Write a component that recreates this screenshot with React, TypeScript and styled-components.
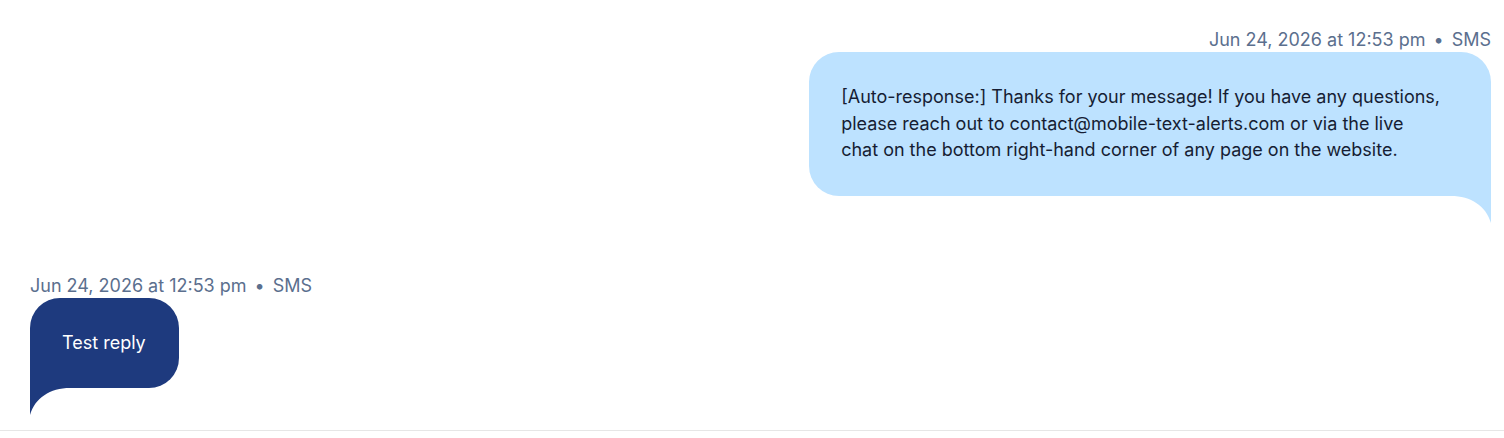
import React from 'react';
import styled, { createGlobalStyle } from 'styled-components';

const GlobalStyle = createGlobalStyle`
  html, body {
    margin: 0;
    padding: 0;
    background: #ffffff;
  }
  body {
    font-family: Inter, "Noto Sans", "Liberation Sans", sans-serif;
    -webkit-font-smoothing: antialiased;
  }
`;

const Thread = styled.div`
  display: flex;
  flex-direction: column;
  gap: 51px;
  padding: 28px 13px 15px 30px;
  border-bottom: 1px solid #e6e6e6;
  box-sizing: border-box;
`;

const MessageGroup = styled.div<{ $outgoing?: boolean }>`
  display: flex;
  flex-direction: column;
  align-items: ${(p) => (p.$outgoing ? 'flex-end' : 'flex-start')};
`;

const Meta = styled.div`
  font-size: 18px;
  line-height: 24px;
  color: #5b6f8e;
  white-space: nowrap;
`;

const Dot = styled.span`
  margin: 0 8px;
`;

const Bubble = styled.div<{ $outgoing?: boolean }>`
  position: relative;
  box-sizing: border-box;
  padding: ${(p) => (p.$outgoing ? '32px 51px 32px 32px' : '32px 33px 32px 32px')};
  margin-bottom: 27px;
  font-size: 18px;
  line-height: 26.6px;
  white-space: nowrap;
  background: ${(p) => (p.$outgoing ? '#bde2ff' : '#1e3a7e')};
  color: ${(p) => (p.$outgoing ? '#161d33' : '#ffffff')};
  border-radius: ${(p) => (p.$outgoing ? '30px 30px 0 30px' : '30px 30px 30px 0')};
`;

const Tail = styled.svg<{ $outgoing?: boolean }>`
  position: absolute;
  top: 100%;
  ${(p) => (p.$outgoing ? 'right: 0;' : 'left: 0;')}
  width: 40px;
  height: 27px;
  display: block;
`;

const BubbleTail = ({ outgoing }: { outgoing?: boolean }) => (
  <Tail $outgoing={outgoing} viewBox="0 0 40 27" aria-hidden="true">
    {outgoing ? (
      <path d="M0 0 H40 V27 C35 10 20 0 0 0 Z" fill="#bde2ff" />
    ) : (
      <path d="M40 0 H0 V27 C5 10 20 0 40 0 Z" fill="#1e3a7e" />
    )}
  </Tail>
);

interface Message {
  id: number;
  outgoing: boolean;
  time: string;
  channel: string;
  lines: string[];
}

const messages: Message[] = [
  {
    id: 1,
    outgoing: true,
    time: 'Jun 24, 2026 at 12:53 pm',
    channel: 'SMS',
    lines: [
      '[Auto-response:] Thanks for your message! If you have any questions,',
      'please reach out to contact@mobile-text-alerts.com or via the live',
      'chat on the bottom right-hand corner of any page on the website.',
    ],
  },
  {
    id: 2,
    outgoing: false,
    time: 'Jun 24, 2026 at 12:53 pm',
    channel: 'SMS',
    lines: ['Test reply'],
  },
];

export default function App() {
  return (
    <>
      <GlobalStyle />
      <Thread>
        {messages.map((m) => (
          <MessageGroup key={m.id} $outgoing={m.outgoing}>
            <Meta>
              {m.time}
              <Dot>•</Dot>
              {m.channel}
            </Meta>
            <Bubble $outgoing={m.outgoing}>
              {m.lines.map((line, i) => (
                <React.Fragment key={i}>
                  {i > 0 && <br />}
                  {line}
                </React.Fragment>
              ))}
              <BubbleTail outgoing={m.outgoing} />
            </Bubble>
          </MessageGroup>
        ))}
      </Thread>
    </>
  );
}
